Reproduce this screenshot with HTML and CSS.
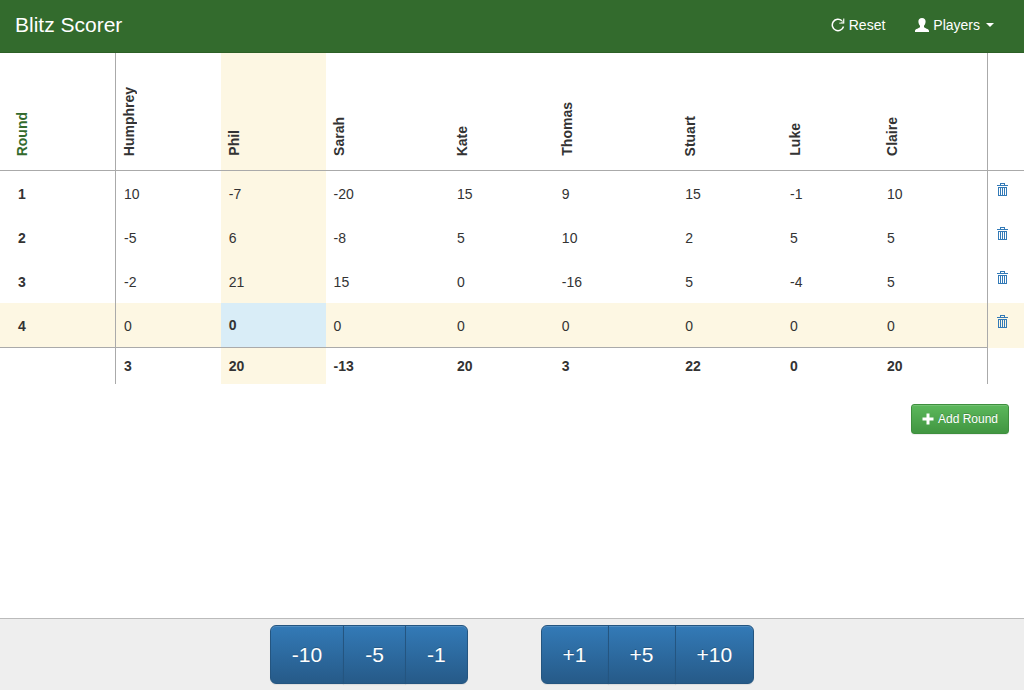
FILE: index.html
```html
<!DOCTYPE html>
<html lang="en">
<head>
<meta charset="utf-8">
<meta name="viewport" content="width=device-width, initial-scale=1">
<title>Blitz Scorer</title>
<link rel="stylesheet" href="styles.css">
</head>
<body>
<svg class="sprite" aria-hidden="true">
  <symbol id="trash" viewBox="0 0 11 13">
    <path d="M0 2h11v1H0zM3 0h5v1H3zM3 1h1v1H3zM7 1h1v1H7zM1 4h9v1H1zM1 5h1v7H1zM3 5h1v7H3zM5 5h1v7H5zM7 5h1v7H7zM9 5h1v7H9zM1 12h9v1H1z" fill="currentColor"/>
  </symbol>
</svg>
<header class="navbar">
  <a class="brand" href="#">Blitz Scorer</a>
  <nav class="nav">
    <a class="nav-link" href="#">
      <svg class="icon" viewBox="0 0 14 14"><path d="M12.500 8.500A5.700 5.700 0 1 1 10.900 2.800" fill="none" stroke="currentColor" stroke-width="1.500"/><path d="M13.300 0.400V5.600H8.100V4.800H12.300V0.400z" fill="currentColor"/><path d="M13 1.200V5.200H9z" fill="currentColor" opacity="0.600"/></svg>
      Reset</a>
    <a class="nav-link" href="#">
      <svg class="icon" viewBox="0 0 14 14"><path d="M7 0C9.300 0 10.600 1.300 10.600 3.500C10.600 5.500 9.800 6.800 9 7.800V9C9.500 10.200 14 10.900 14 12.800V14H0V12.800C0 10.900 4.500 10.200 5 9V7.800C4.200 6.800 3.400 5.500 3.400 3.500C3.400 1.300 4.700 0 7 0z" fill="currentColor"/></svg>
      Players <span class="caret"></span></a>
  </nav>
</header>
<main class="content">
  <table class="scores">
    <colgroup>
      <col class="col-round"><col class="col-base"><col class="col-base"><col class="col-wide"><col class="col-base"><col class="col-wide"><col class="col-base"><col class="col-narrow"><col class="col-last"><col class="col-action">
    </colgroup>
    <thead>
      <tr>
        <th class="round" scope="col"><span class="upright">Round</span></th>
        <th scope="col"><span class="upright">Humphrey</span></th>
        <th class="current" scope="col"><span class="upright">Phil</span></th>
        <th scope="col"><span class="upright">Sarah</span></th>
        <th scope="col"><span class="upright">Kate</span></th>
        <th scope="col"><span class="upright">Thomas</span></th>
        <th scope="col"><span class="upright">Stuart</span></th>
        <th scope="col"><span class="upright">Luke</span></th>
        <th class="last" scope="col"><span class="upright">Claire</span></th>
        <td></td>
      </tr>
    </thead>
    <tbody>
      <tr>
        <th class="round" scope="row">1</th><td>10</td><td class="current">-7</td><td>-20</td><td>15</td><td>9</td><td>15</td><td>-1</td><td class="last">10</td>
        <td class="action"><button class="delete" type="button" aria-label="Delete round 1"><svg class="trash"><use href="#trash"/></svg></button></td>
      </tr>
      <tr>
        <th class="round" scope="row">2</th><td>-5</td><td class="current">6</td><td>-8</td><td>5</td><td>10</td><td>2</td><td>5</td><td class="last">5</td>
        <td class="action"><button class="delete" type="button" aria-label="Delete round 2"><svg class="trash"><use href="#trash"/></svg></button></td>
      </tr>
      <tr>
        <th class="round" scope="row">3</th><td>-2</td><td class="current">21</td><td>15</td><td>0</td><td>-16</td><td>5</td><td>-4</td><td class="last">5</td>
        <td class="action"><button class="delete" type="button" aria-label="Delete round 3"><svg class="trash"><use href="#trash"/></svg></button></td>
      </tr>
      <tr class="active">
        <th class="round" scope="row">4</th><td>0</td><td class="current">0</td><td>0</td><td>0</td><td>0</td><td>0</td><td>0</td><td class="last">0</td>
        <td class="action"><button class="delete" type="button" aria-label="Delete round 4"><svg class="trash"><use href="#trash"/></svg></button></td>
      </tr>
    </tbody>
    <tfoot>
      <tr>
        <td class="round"></td><td>3</td><td class="current">20</td><td>-13</td><td>20</td><td>3</td><td>22</td><td>0</td><td class="last">20</td><td></td>
      </tr>
    </tfoot>
  </table>
  <div class="actions">
    <button class="add" type="button"><svg class="plus" viewBox="0 0 12 12"><path d="M4.500 0.500h3v4h4v3h-4v4h-3v-4h-4v-3h4z" fill="currentColor"/></svg>Add Round</button>
  </div>
</main>
<footer class="keypad">
  <div class="group">
    <button class="key" type="button">-10</button><button class="key" type="button">-5</button><button class="key" type="button">-1</button>
  </div>
  <div class="group">
    <button class="key" type="button">+1</button><button class="key" type="button">+5</button><button class="key" type="button">+10</button>
  </div>
</footer>
</body>
</html>
```
FILE: styles.css
```css
* { box-sizing: border-box; }

body {
  margin: 0;
  min-height: 100vh;
  display: flex;
  flex-direction: column;
  background: #fff;
  color: #333;
  font: 14px/20px "Helvetica Neue", Helvetica, "Liberation Sans", Arial, sans-serif;
}

a { color: inherit; text-decoration: none; }
button { font-family: inherit; cursor: pointer; }
.sprite { display: none; }

.navbar {
  display: flex;
  justify-content: space-between;
  align-items: center;
  padding: 15px 30px 17px 15px;
  background: #336b2d;
  border-bottom: 1px solid #2d6026;
  color: #fff;
}
.brand { font-size: 21px; line-height: 20px; }
.nav { display: flex; gap: 30px; }
.nav-link { display: flex; align-items: center; gap: 4px; line-height: 20px; }
.icon { width: 14px; height: 14px; }
.caret {
  margin-left: 2px;
  border: 4px solid transparent;
  border-top-color: #fff;
  border-bottom: 0;
}

.content { flex: 1; }

.scores {
  width: 100%;
  table-layout: fixed;
  border-collapse: separate;
  border-spacing: 0;
}
.col-round { width: 11.33%; }
.col-base { width: 10.24%; }
.col-wide { width: 12.06%; }
.col-narrow { width: 9.47%; }
.col-last { width: 10.64%; }
.col-action { width: 3.52%; }

.scores th, .scores td {
  height: 44px;
  padding: 8px;
  text-align: left;
  vertical-align: middle;
}
.scores .round { padding-left: 18px; border-right: 1px solid #aaa; }
.scores .last { border-right: 1px solid #aaa; }
.scores .current { background: #fdf7e3; }
.scores tbody td { padding-top: 10px; }

.scores thead th, .scores thead td {
  height: 118px;
  padding: 14px 3px;
  vertical-align: bottom;
  border-bottom: 1px solid #aaa;
}
.scores thead .round { padding-left: 12px; color: #336b2d; }
.upright {
  display: block;
  width: 20px;
  writing-mode: vertical-rl;
  transform: rotate(180deg);
}

.scores .active > * { height: 45px; background: #fdf7e3; border-bottom: 1px solid #aaa; }
.scores .active .action { border-bottom: 0; }
.scores .active .current { padding-top: 8px; background: #d9edf7; font-weight: bold; }

.scores tfoot td { height: 36px; font-weight: bold; }

.scores tbody .action { padding: 12px 9px; vertical-align: top; }
.scores tbody .round { padding-top: 9px; }
.delete { display: block; padding: 0; border: 0; background: none; color: #337ab7; }
.trash { display: block; width: 11px; height: 13px; }

.actions { display: flex; justify-content: flex-end; padding: 20px 15px; }
.add {
  display: flex;
  align-items: center;
  gap: 4px;
  padding: 5px 10px;
  border: 1px solid #3e8f3e;
  border-radius: 3px;
  background: linear-gradient(#5cb85c, #419641);
  box-shadow: inset 0 1px 0 rgba(255, 255, 255, .15), 0 1px 1px rgba(0, 0, 0, .075);
  color: #fff;
  font-size: 12px;
  line-height: 18px;
  text-shadow: 0 -1px 0 rgba(0, 0, 0, .2);
}
.plus { width: 12px; height: 12px; }

.keypad {
  display: flex;
  justify-content: center;
  gap: 73px;
  padding: 6px 15px;
  border-top: 1px solid #bbb;
  background: #eee;
}
.group { display: flex; }
.key {
  padding: 16px 21px;
  border: 1px solid #245580;
  background: linear-gradient(#337ab7, #265a88);
  box-shadow: inset 0 1px 0 rgba(255, 255, 255, .15), 0 1px 1px rgba(0, 0, 0, .075);
  color: #fff;
  font-size: 21px;
  line-height: 25px;
  text-shadow: 0 -1px 0 rgba(0, 0, 0, .2);
}
.key + .key { margin-left: -1px; }
.key:first-child { border-radius: 6px 0 0 6px; }
.key:last-child { border-radius: 0 6px 6px 0; }
```
